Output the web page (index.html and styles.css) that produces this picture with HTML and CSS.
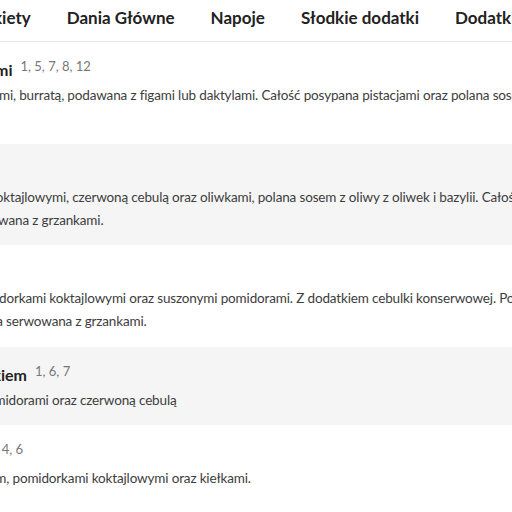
FILE: index.html
```html
<!DOCTYPE html>
<html lang="pl">
<head>
<meta charset="utf-8">
<title>Menu</title>
<link rel="stylesheet" href="styles.css">
</head>
<body>
<div class="page">
  <nav class="nav">
    <a href="#">Przystawki</a>
    <a href="#">Bankiety</a>
    <a href="#">Dania Główne</a>
    <a href="#">Napoje</a>
    <a href="#">Słodkie dodatki</a>
    <a href="#">Dodatki</a>
    <a href="#">Alkohole</a>
  </nav>
  <section class="menu">
    <article class="item">
      <h3 class="title">Sałatki z burratą i z figami<span class="sup">1, 5, 7, 8, 12</span></h3>
      <p class="desc">Mix sałat z rukolą, pomidorkami, burratą, podawana z figami lub daktylami. Całość posypana pistacjami oraz polana sosem balsamicznym. Pyszna.</p>
    </article>
    <article class="item alt">
      <h3 class="title">Sałatka grecka<span class="sup">7</span></h3>
      <p class="desc">Sałata z fetą i pomidorkami koktajlowymi, czerwoną cebulą oraz oliwkami, polana sosem z oliwy z oliwek i bazylii. Całość posypana parmezanem, podawana z grzankami.</p>
    </article>
    <article class="item">
      <h3 class="title">Sałatka cezar<span class="sup">3</span></h3>
      <p class="desc">Mix sałat z kurczakiem i pomidorkami koktajlowymi oraz suszonymi pomidorami. Z dodatkiem cebulki konserwowej. Polana sosem jogurtowym. Ta sałatka serwowana z grzankami.</p>
    </article>
    <article class="item alt">
      <h3 class="title">Wrapy z ostrym kurczakiem<span class="sup">1, 6, 7</span></h3>
      <p class="desc">Wrap z kurczakiem, salsą, pomidorami oraz czerwoną cebulą</p>
    </article>
    <article class="item">
      <h3 class="title">Poke z łososiem i jajem<span class="sup">4, 6</span></h3>
      <p class="desc">Mix sałat ze świeżym łososiem, pomidorkami koktajlowymi oraz kiełkami.</p>
    </article>
  </section>
</div>
</body>
</html>
```

FILE: styles.css
```css
html, body {
  margin: 0;
  padding: 0;
  overflow: hidden;
  background: #ffffff;
}

body {
  font-family: Lato, "Open Sans", "Liberation Sans", sans-serif;
  color: #333333;
}

.page {
  width: 720px;
  margin-left: -170px;
}

.nav {
  display: flex;
  gap: 36px;
  padding: 8px 0 14px 15px;
  border-bottom: 1px solid #e8e8e8;
  white-space: nowrap;
}

.nav a {
  font-size: 17px;
  font-weight: 700;
  line-height: 19px;
  color: #222222;
  text-decoration: none;
}

.item {
  padding: 17px 0 13.5px;
  background: #ffffff;
}

.item.alt {
  background: #f5f5f5;
}

.title {
  margin: 0;
  font-size: 16px;
  font-weight: 700;
  line-height: 22px;
  color: #222222;
}

.sup {
  margin-left: 8px;
  font-size: 13px;
  font-weight: 400;
  line-height: 1;
  color: #777777;
  vertical-align: 5px;
}

.desc {
  margin: 3px 0 0;
  font-size: 13.5px;
  letter-spacing: -0.15px;
  line-height: 23px;
  color: #3d3d3d;
}
```
